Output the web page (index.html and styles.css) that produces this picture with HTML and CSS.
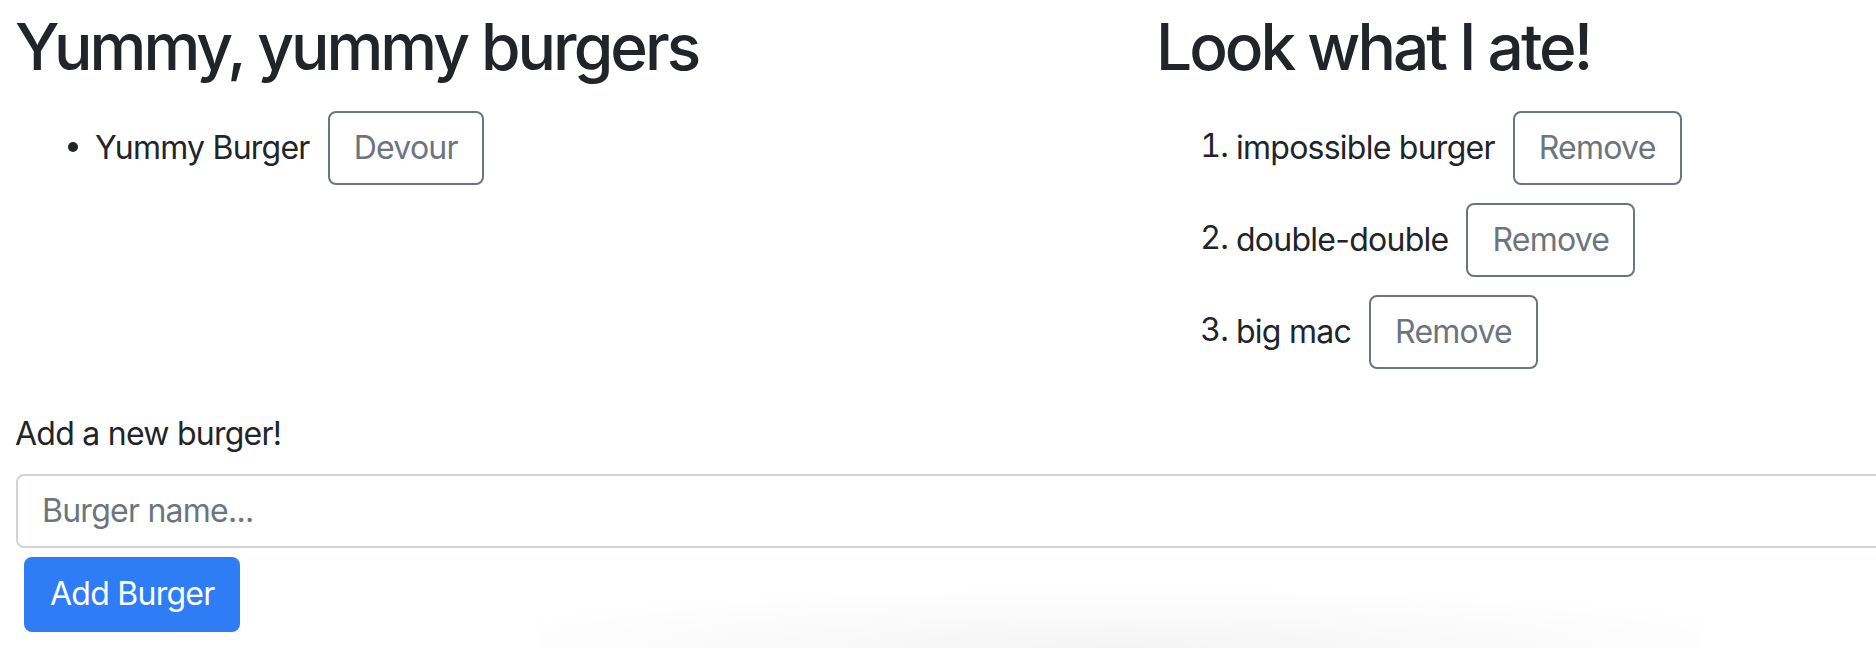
FILE: index.html
```html
<!DOCTYPE html>
<html lang="en">
<head>
<meta charset="utf-8">
<title>Burgers</title>
<link rel="stylesheet" href="styles.css">
</head>
<body>
<div class="page">
  <div class="row">
    <section class="col">
      <h2 class="heading">Yummy, yummy burgers</h2>
      <ul class="list">
        <li class="item"><span class="name">Yummy Burger</span><button class="btn btn-outline" type="button">Devour</button></li>
      </ul>
    </section>
    <section class="col">
      <h2 class="heading">Look what I ate!</h2>
      <ol class="list">
        <li class="item"><span class="name">impossible burger</span><button class="btn btn-outline" type="button">Remove</button></li>
        <li class="item"><span class="name">double-double</span><button class="btn btn-outline" type="button">Remove</button></li>
        <li class="item"><span class="name">big mac</span><button class="btn btn-outline" type="button">Remove</button></li>
      </ol>
    </section>
  </div>
  <form class="add-form">
    <label class="label" for="burger">Add a new burger!</label>
    <input class="form-control" id="burger" type="text" placeholder="Burger name...">
    <button class="btn btn-primary" type="button">Add Burger</button>
  </form>
  <div class="bottom-shadow"></div>
</div>
</body>
</html>
```
FILE: styles.css
```css
html, body {
  margin: 0;
  padding: 0;
  overflow: hidden;
  background: #ffffff;
}

body {
  font-family: Inter, "Liberation Sans", Arial, sans-serif;
  font-size: 32px;
  line-height: 48px;
  letter-spacing: -0.75px;
  color: #212529;
}

.page {
  position: relative;
  width: 2300px;
  height: 648px;
  padding: 9px 0 0 15px;
  box-sizing: border-box;
}

.row {
  display: grid;
  grid-template-columns: 1141px 1141px;
}

.heading {
  margin: 0 0 16px 0;
  font-size: 64px;
  font-weight: 500;
  line-height: 76.8px;
  letter-spacing: -3px;
}

.list {
  margin: 0 0 32px 0;
  padding-left: 80px;
}

.item {
  line-height: 48px;
}

.name {
  vertical-align: middle;
}

.btn {
  display: inline-block;
  box-sizing: border-box;
  height: 74px;
  margin: 9px 0 9px 18px;
  padding: 0 24px;
  font-family: inherit;
  font-size: 32px;
  letter-spacing: -0.75px;
  line-height: 70px;
  border-radius: 8px;
  vertical-align: middle;
  background: #ffffff;
  cursor: pointer;
}

.btn-outline {
  border: 2px solid #6c757d;
  color: #6c757d;
}

.add-form {
  display: flex;
  flex-direction: column;
  align-items: flex-start;
}

.label {
  display: block;
  margin-bottom: 16px;
}

.form-control {
  box-sizing: border-box;
  width: 2260px;
  height: 74px;
  margin: 0 0 0 1px;
  padding: 0 24px;
  font-family: inherit;
  font-size: 32px;
  letter-spacing: -0.75px;
  color: #495057;
  border: 2px solid #ced4da;
  border-radius: 8px;
  background: #ffffff;
}

.form-control::placeholder {
  color: #6c757d;
}

.add-form .btn-primary {
  margin: 9px 0 0 9px;
  height: 75px;
  border: 2px solid #2f7df6;
  background: #2f7df6;
  color: #ffffff;
}

.bottom-shadow {
  position: absolute;
  left: 540px;
  top: 585px;
  width: 1160px;
  height: 63px;
  background: radial-gradient(ellipse 60% 100% at 50% 100%, rgba(0, 0, 0, 0.045), rgba(0, 0, 0, 0.015) 65%, rgba(0, 0, 0, 0) 100%);
  pointer-events: none;
}
```
